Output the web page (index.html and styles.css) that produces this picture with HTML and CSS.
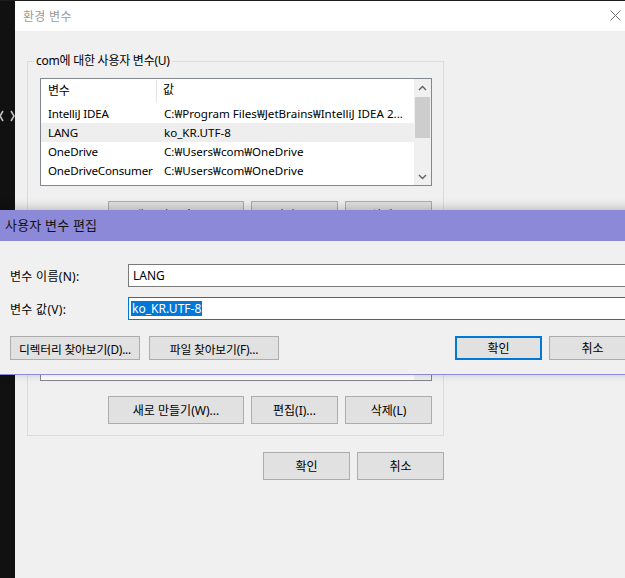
FILE: index.html
```html
<!DOCTYPE html>
<html lang="ko">
<head>
<meta charset="utf-8">
<title>환경 변수</title>
<link rel="stylesheet" href="styles.css">
</head>
<body>
<div class="screen">
  <div class="strip">
    <svg class="chev" width="15" height="12" viewBox="0 0 15 12"><polyline points="3,1 0,6 3,11" fill="none" stroke="#c4c4c4" stroke-width="1.6"/><polyline points="11,1 14,6 11,11" fill="none" stroke="#c4c4c4" stroke-width="1.6"/></svg>
  </div>
  <div class="win">
    <div class="titlebar">
      <span class="wtitle">환경 변수</span>
      <svg class="close" width="11" height="11" viewBox="0 0 11 11"><path d="M0.5 0.5 L10.5 10.5 M10.5 0.5 L0.5 10.5" stroke="#707070" stroke-width="1" fill="none"/></svg>
    </div>
    <div class="content">
      <fieldset class="group g1">
        <legend>com에 대한 사용자 변수(U)</legend>
        <div class="list l1">
          <div class="list-body">
            <div class="row head"><span class="c1">변수</span><span class="c2">값</span></div>
            <div class="row"><span class="c1">IntelliJ IDEA</span><span class="c2">C:₩Program Files₩JetBrains₩IntelliJ IDEA 2...</span></div>
            <div class="row sel"><span class="c1">LANG</span><span class="c2">ko_KR.UTF-8</span></div>
            <div class="row"><span class="c1">OneDrive</span><span class="c2">C:₩Users₩com₩OneDrive</span></div>
            <div class="row"><span class="c1">OneDriveConsumer</span><span class="c2">C:₩Users₩com₩OneDrive</span></div>
            <div class="row"><span class="c1">Path</span><span class="c2">C:₩Users₩com₩AppData₩Local₩Microsoft₩Windo...</span></div>
          </div>
          <div class="vscroll">
            <div class="arrow"><svg width="9" height="6" viewBox="0 0 9 6"><polyline points="1,5 4.5,1.5 8,5" fill="none" stroke="#606060" stroke-width="1.4"/></svg></div>
            <div class="thumb"></div>
            <div class="track"></div>
            <div class="arrow"><svg width="9" height="6" viewBox="0 0 9 6"><polyline points="1,1 4.5,4.5 8,1" fill="none" stroke="#606060" stroke-width="1.4"/></svg></div>
          </div>
        </div>
        <div class="btns">
          <button class="btn wide">새로 만들기(W)...</button>
          <button class="btn">편집(I)...</button>
          <button class="btn">삭제(L)</button>
        </div>
      </fieldset>
      <fieldset class="group g2">
        <legend>시스템 변수(S)</legend>
        <div class="list l2">
          <div class="list-body">
            <div class="row head"><span class="c1">변수</span><span class="c2">값</span></div>
            <div class="row"><span class="c1">ComSpec</span><span class="c2">C:₩WINDOWS₩system32₩cmd.exe</span></div>
            <div class="row"><span class="c1">DriverData</span><span class="c2">C:₩Windows₩System32₩Drivers₩DriverData</span></div>
            <div class="row"><span class="c1">NUMBER_OF_PROCESSORS</span><span class="c2">8</span></div>
            <div class="row"><span class="c1">OS</span><span class="c2">Windows_NT</span></div>
            <div class="row"><span class="c1">Path</span><span class="c2">C:₩WINDOWS₩system32</span></div>
          </div>
          <div class="vscroll">
            <div class="arrow"></div>
            <div class="thumb"></div>
            <div class="track"></div>
            <div class="arrow"></div>
          </div>
        </div>
        <div class="btns">
          <button class="btn wide">새로 만들기(W)...</button>
          <button class="btn">편집(I)...</button>
          <button class="btn">삭제(L)</button>
        </div>
      </fieldset>
      <div class="footer">
        <button class="btn tall">확인</button>
        <button class="btn tall">취소</button>
      </div>
    </div>
  </div>

  <div class="dialog">
    <div class="dtitle">사용자 변수 편집</div>
    <div class="dbody">
      <div class="field">
        <label class="flabel">변수 이름(N):</label>
        <div class="input">LANG</div>
      </div>
      <div class="field">
        <label class="flabel">변수 값(V):</label>
        <div class="input focus"><span class="selected">ko_KR.UTF-8</span></div>
      </div>
      <div class="dbtns">
        <div class="left">
          <button class="btn dbtn">디렉터리 찾아보기(D)...</button>
          <button class="btn dbtn">파일 찾아보기(F)...</button>
        </div>
        <div class="right">
          <button class="btn okbtn default">확인</button>
          <button class="btn okbtn">취소</button>
        </div>
      </div>
    </div>
  </div>
</div>
</body>
</html>
```

FILE: styles.css
```css
* { box-sizing: border-box; }
html, body { margin: 0; padding: 0; }
body {
  font-family: "Noto Sans", "Noto Sans CJK KR", sans-serif;
  font-size: 12px;
  color: #000;
  background: #111;
}
.screen {
  position: relative;
  width: 625px;
  height: 578px;
  overflow: hidden;
  display: flex;
  padding-top: 1px;
  background: #1c1c1c;
}
.strip {
  width: 15px;
  flex: none;
  background: #111;
}
.chev { display: block; margin-top: 109px; }
.win {
  flex: 1;
  background: #f0f0f0;
  display: flex;
  flex-direction: column;
}
.titlebar {
  height: 30px;
  background: #fff;
  display: flex;
  align-items: center;
  padding-left: 8px;
}
.wtitle { color: #9a9a9a; font-size: 12px; letter-spacing: 0.3px; }
.close { margin-left: auto; margin-right: 4px; margin-top: -1px; }
.content {
  padding: 22px 0 0 12px;
}
.group {
  width: 417px;
  margin: 0;
  border: 1px solid #dcdcdc;
  padding: 9px 11px 11px 12px;
  min-width: 0;
}
.group legend {
  padding: 0 2px;
  margin-left: -6px;
  line-height: 16px;
  font-size: 12px;
  letter-spacing: -0.25px;
}
.g2 { margin-top: 9px; }
.list {
  border: 1px solid #828790;
  background: #fff;
  display: flex;
  overflow: hidden;
}
.l1 { height: 108px; }
.l2 { height: 106px; }
.list-body { flex: 1; overflow: hidden; }
.row {
  display: flex;
  height: 19px;
  line-height: 19px;
  white-space: nowrap;
  font-size: 11.6px;
}
.row.head { height: 25px; line-height: 22px; font-size: 12px; }
.row.head .c1 { border-right: 1px solid #e5e5e5; height: 23px; margin-top: 1px; line-height: 21px; }
.row.sel { background: #eeeeee; }
.c1 { width: 116px; padding-left: 7px; flex: none; overflow: hidden; letter-spacing: -0.2px; }
.c2 { padding-left: 7px; overflow: hidden; }
.row.head .c2 { padding-left: 6px; }
.vscroll {
  width: 17px;
  flex: none;
  background: #f0f0f0;
  display: flex;
  flex-direction: column;
}
.arrow {
  height: 17px;
  display: flex;
  align-items: center;
  justify-content: center;
}
.arrow svg { display: block; }
.thumb {
  height: 41px;
  margin: 1px 1px 0;
  background: #cdcdcd;
}
.track { flex: 1; }
.btns {
  display: flex;
  justify-content: flex-end;
  gap: 7px;
  margin-top: 15px;
}
.btn {
  font-family: inherit;
  font-size: 12px;
  color: #000;
  background: #e1e1e1;
  border: 1px solid #adadad;
  padding: 0;
  margin: 0;
  height: 28px;
  width: 87px;
  white-space: nowrap;
}
.btn.wide { width: 136px; }
.footer {
  width: 417px;
  display: flex;
  justify-content: flex-end;
  gap: 7px;
  margin-top: 16px;
}
.dialog {
  position: absolute;
  left: 0;
  top: 210px;
  width: 640px;
  background: #f0f0f0;
  border-bottom: 1px solid #8c8ad8;
  box-shadow: 0 -2px 10px rgba(0, 0, 0, 0.22);
}
.dtitle {
  height: 31px;
  line-height: 31px;
  background: #8c8ad8;
  padding-left: 5px;
  font-size: 13px;
  letter-spacing: 0.2px;
  color: #111;
}
.dbody {
  padding: 23px 4px 14px 10px;
}
.field {
  display: flex;
  align-items: center;
  height: 23px;
  margin-bottom: 10px;
}
.flabel { width: 118px; flex: none; letter-spacing: 0.3px; }
.input {
  flex: 1;
  height: 23px;
  border: 1px solid #7a7a7a;
  background: #fff;
  padding-left: 4px;
  line-height: 21px;
}
.input.focus { border-color: #0078d7; padding-left: 2px; }
.selected {
  background: #0078d7;
  color: #fff;
  padding: 0 1px;
  display: inline-block;
  line-height: 15px;
}
.dbtns {
  display: flex;
  margin-top: 16px;
}
.left, .right { display: flex; }
.left { gap: 9px; }
.right { margin-left: auto; gap: 7px; }
.dbtn { width: 130px; height: 24px; letter-spacing: -0.2px; font-size: 11.8px; }
.okbtn { width: 87px; height: 24px; }
.okbtn.default { border: 2px solid #0078d7; }
```
